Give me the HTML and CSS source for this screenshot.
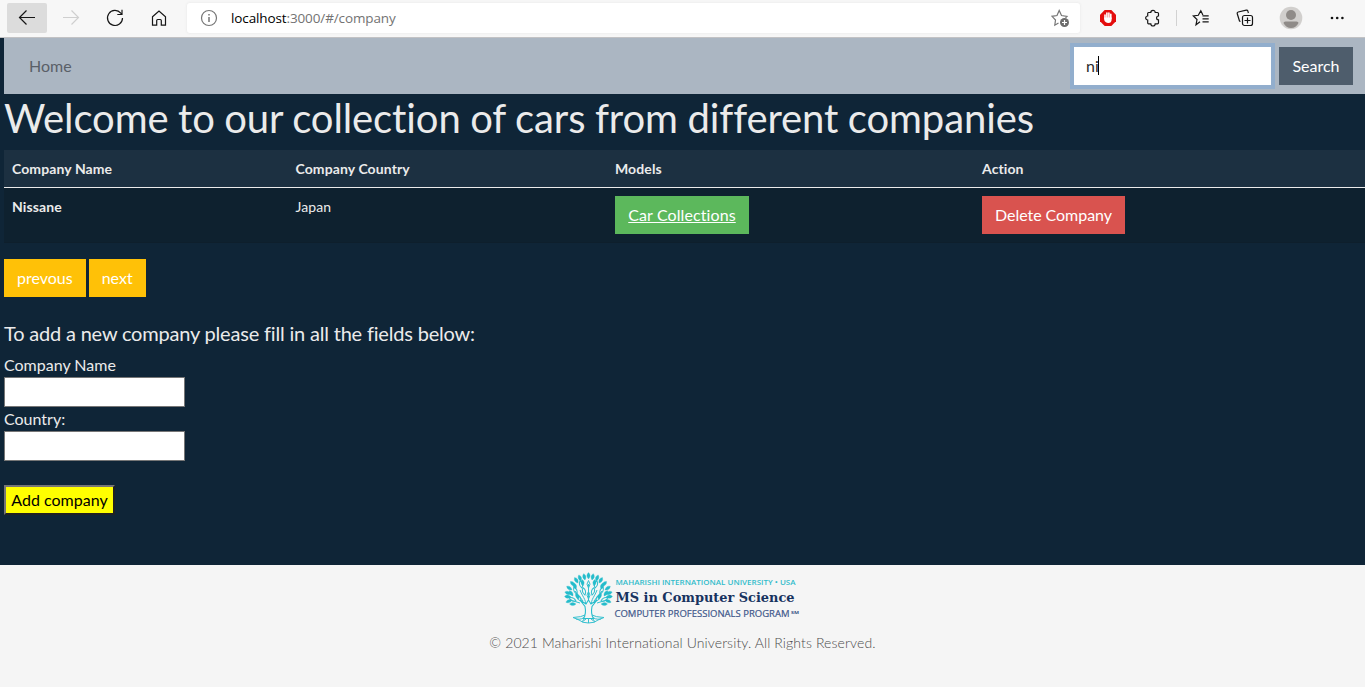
FILE: index.html
```html
<!DOCTYPE html>
<html lang="en">
<head>
<meta charset="utf-8">
<title>Car companies</title>
<link rel="stylesheet" href="styles.css">
</head>
<body>
<div class="browser">
  <div class="tool back"><svg width="18" height="18" viewBox="0 0 18 18"><path d="M17 8.500H1.500M8.500 1.500L1.500 8.500l7 7"/></svg></div>
  <div class="tool forward"><svg width="18" height="18" viewBox="0 0 18 18"><path d="M1 8.500h15.500M9.500 1.500l7 7-7 7"/></svg></div>
  <div class="tool"><svg width="18" height="18" viewBox="0 0 18 18"><path d="M16.500 9A7.500 7.500 0 1 1 14.800 4.200L16 5.500M16 .8v4.700h-4.700"/></svg></div>
  <div class="tool"><svg width="18" height="18" viewBox="0 0 18 18"><path d="M2.500 7.700L9 2l6.500 5.700v8.500h-4.200v-4.700a1 1 0 0 0-1-1H7.700a1 1 0 0 0-1 1v4.700H2.500z"/></svg></div>
  <div class="address">
    <svg class="info" width="18" height="18" viewBox="0 0 18 18"><circle cx="9" cy="9" r="7.500"/><path d="M9 8v5M9 5v1.500" stroke-width="1.500"/></svg>
    <span class="url"><b>localhost</b>:3000/#/company</span>
    <svg class="fav" width="18" height="18" viewBox="0 0 18 18"><path d="M7.500 14L3.800 16.200 4.500 11 1 7.300l5-.8L8.200 1.500 10.500 6.500l5.500.8-1.500 1.500"/><circle class="dot" cx="13.500" cy="13.500" r="4.500"/><path class="plus" d="M13.500 11v5M11 13.500h5"/></svg>
  </div>
  <div class="extensions">
    <svg width="18" height="18" viewBox="0 0 18 18"><path d="M5.700 1h6.600L17 5.700v6.600L12.300 17H5.700L1 12.300V5.700z" fill="#e40d0d" stroke="none"/><path d="M6 9.500V6M7.900 9V4M9.900 9V4M11.800 9.500V5.200" stroke="#fff" stroke-width="1.600" stroke-linecap="round"/><path d="M5.200 8.500h7.400v2.200c0 2-1.200 3.300-3.200 3.300S5.200 12.500 5.200 10.500z" fill="#fff" stroke="none"/></svg>
    <svg width="18" height="18" viewBox="0 0 18 18"><path d="M5.500 3.500h2.300a2.200 2.200 0 0 1 4.400 0h2.300q1 0 1 1V7a1.900 1.900 0 0 0 0 3.800v3q0 1-1 1h-2.300a2.200 2.200 0 0 1-4.400 0H5.500q-.8 0-.8-1V11a2 2 0 1 1 0-4V4.500q0-1 .8-1z"/></svg>
    <i class="divider"></i>
    <svg width="18" height="18" viewBox="0 0 18 18"><path d="M8 12.800L4 15.800l1-5.300L1.300 7l5-.7L8.800 1.700l2.100 4.200M10.500 6.800h6.200M10.500 9.800h6.200M10.500 12.800h6.200"/></svg>
    <svg width="18" height="18" viewBox="0 0 18 18"><rect x="6.500" y="6.500" width="10" height="10" rx="2"/><path d="M11.500 8.500v6M8.500 11.500h6M4.500 12.500L3.500 12 1.200 4.500q-.2-1.200 1-1.500l8-1.800q1.400-.2 1.700 1l.5 1.800M4.500 12.500"/></svg>
    <svg class="avatar" width="24" height="24" viewBox="0 0 24 24"><circle cx="12" cy="12" r="11.300" fill="#d1cfcd"/><circle cx="12" cy="9" r="5" fill="#8f8b88"/><path d="M4.500 17q0-1.500 2-1.500h11q2 0 2 1.500-2.500 5-7.500 5t-7.500-5z" fill="#8f8b88"/></svg>
    <svg width="18" height="18" viewBox="0 0 18 18"><g fill="#111" stroke="none"><circle cx="4" cy="9" r="1.300"/><circle cx="9.200" cy="9" r="1.300"/><circle cx="14.400" cy="9" r="1.300"/></g></svg>
  </div>
</div>
<main class="page">
  <nav class="navbar">
    <a class="home">Home</a>
    <form class="search"><div class="search-input">ni<i class="caret"></i></div><button type="button" class="btn secondary">Search</button></form>
  </nav>
  <h1>Welcome to our collection of cars from different companies</h1>
  <table>
    <colgroup><col class="c1"><col class="c2"><col class="c3"><col></colgroup>
    <thead><tr><th>Company Name</th><th>Company Country</th><th>Models</th><th>Action</th></tr></thead>
    <tbody><tr><th>Nissane</th><td>Japan</td><td><button class="btn success">Car Collections</button></td><td><button class="btn danger">Delete Company</button></td></tr></tbody>
  </table>
  <div class="pager"><button class="btn warning">prevous</button><button class="btn warning">next</button></div>
  <h5>To add a new company please fill in all the fields below:</h5>
  <form class="add">
    <label>Company Name</label><input type="text">
    <label>Country:</label><input type="text">
    <button type="button" class="submit">Add company</button>
  </form>
</main>
<footer>
  <svg class="logo" width="238" height="52" viewBox="0 0 238 52">
    <defs>
      <path id="leaf" d="M0 0q-3.200-3.500 0-6.500q3.200 3 0 6.500z"/>
      <path id="outline" d="M0 0q-3-4 0-7.500q3 3.500 0 7.500z"/>
    </defs>
    <g class="branches">
      <path d="M24.500 31V12M22 34c0-7-4-10-6-16M27 34c0-7 4-10 6-16M16 31l-10-3M33 31l10-3M19 29l-8-10M30 29l8-10"/>
    </g>
    <g class="crown-outline">
      <use href="#outline" transform="translate(24.500 27)"/><use href="#outline" transform="translate(21 23) rotate(-15)"/><use href="#outline" transform="translate(28 23) rotate(15)"/>
      <use href="#outline" transform="translate(17 29) rotate(-35)"/><use href="#outline" transform="translate(32 29) rotate(35)"/><use href="#outline" transform="translate(13 22) rotate(-25)"/><use href="#outline" transform="translate(36 22) rotate(25)"/>
      <use href="#outline" transform="translate(12 29) rotate(-65)"/><use href="#outline" transform="translate(37 29) rotate(65)"/><use href="#outline" transform="translate(24.500 16)"/>
      <use href="#outline" transform="translate(18 16) rotate(-15)"/><use href="#outline" transform="translate(31 16) rotate(15)"/>
    </g>
    <g class="crown">
      <use href="#leaf" transform="translate(24.500 7)"/><use href="#leaf" transform="translate(21 8) rotate(-12)"/><use href="#leaf" transform="translate(28 8) rotate(12)"/><use href="#leaf" transform="translate(17 9) rotate(-20)"/><use href="#leaf" transform="translate(32 9) rotate(20)"/>
      <use href="#leaf" transform="translate(14 11) rotate(-32)"/><use href="#leaf" transform="translate(35 11) rotate(32)"/><use href="#leaf" transform="translate(11 14) rotate(-45)"/><use href="#leaf" transform="translate(38 14) rotate(45)"/>
      <use href="#leaf" transform="translate(8 18) rotate(-55)"/><use href="#leaf" transform="translate(41 18) rotate(55)"/><use href="#leaf" transform="translate(7 22) rotate(-72)"/><use href="#leaf" transform="translate(42 22) rotate(72)"/>
      <use href="#leaf" transform="translate(7 25) rotate(-85)"/><use href="#leaf" transform="translate(42 25) rotate(85)"/><use href="#leaf" transform="translate(8 28) rotate(-110)"/><use href="#leaf" transform="translate(41 28) rotate(110)"/>
      <use href="#leaf" transform="translate(12 17) rotate(-20)"/><use href="#leaf" transform="translate(37 17) rotate(20)"/><use href="#leaf" transform="translate(19 14) rotate(-8)"/><use href="#leaf" transform="translate(30 14) rotate(8)"/>
      <use href="#leaf" transform="translate(9 24) rotate(-35)"/><use href="#leaf" transform="translate(40 24) rotate(35)"/><use href="#leaf" transform="translate(12 32) rotate(-90)"/><use href="#leaf" transform="translate(37 32) rotate(90)"/>
      <use href="#leaf" transform="translate(15 27) rotate(-30)"/><use href="#leaf" transform="translate(34 27) rotate(30)"/>
    </g>
    <path class="trunk" d="M22 32L16 28l5 6.500c1 5 1 8-1.500 12h10c-2.500-4-2.500-7-1.500-12l5-6.500-6 4-2.500-4z"/>
    <path class="roots" d="M21 43q-3 2-12 2.500l6 2.500q3 3 9.500 3t9.500-3l6-2.500Q31 45 28 43M21 44q-2 4-9 3M28 44q2 4 9 3M22 47l-4 3M27 47l4 3M24.500 46v5M20.500 47l-2 1.500M28.500 47l2 1.500"/>
    <text x="51.500" y="13" class="university" textLength="180" lengthAdjust="spacingAndGlyphs">MAHARISHI INTERNATIONAL UNIVERSITY • USA</text>
    <text x="51.500" y="30" class="degree" textLength="179" lengthAdjust="spacingAndGlyphs">MS in Computer Science</text>
    <text x="50.500" y="45" class="program" textLength="175" lengthAdjust="spacingAndGlyphs">COMPUTER PROFESSIONALS PROGRAM</text>
    <text x="227" y="42" class="mark" textLength="8" lengthAdjust="spacingAndGlyphs">SM</text>
  </svg>
  <p>© 2021 Maharishi International University. All Rights Reserved.</p>
</footer>
</body>
</html>
```
FILE: styles.css
```css
* { box-sizing: border-box; }
body { margin: 0; height: 687px; overflow: hidden; background: #0f2537; color: #ebebeb; font: 16px/1.5 Lato, sans-serif; font-variant-ligatures: none; display: flex; flex-direction: column; }
button, input { font: inherit; border-radius: 0; margin: 0; }

.browser { height: 38px; flex: none; display: flex; align-items: flex-start; background: #f7f7f7; border-bottom: 1px solid #c2c2c4; padding: 3px 18px 0 7px; }
.browser svg { fill: none; stroke: #161616; stroke-width: 1.2; flex: none; }
.tool { flex: none; width: 40px; height: 30px; margin-right: 4px; border-radius: 2px; display: flex; align-items: center; justify-content: center; }
.back { background: #dcdcdc; }
.browser .forward svg { stroke: #cfcfcf; }
.address { flex: none; width: 893px; height: 30px; margin-left: 4px; padding: 0 11px 0 13px; display: flex; align-items: center; background: #fff; border-radius: 3px; box-shadow: 0 0 3px #e4e4e4; }
.browser .info, .browser .fav { stroke: #767676; }
.browser .dot { fill: #6c6c6c; stroke: none; }
.browser .plus { stroke: #fff; }
.url { flex: 1; margin-left: 13px; font: 13.5px/20px "Open Sans", sans-serif; color: #737373; letter-spacing: -.12px; }
.url b { color: #000; font-weight: 400; }
.extensions { flex: none; height: 30px; margin-left: 19px; display: flex; align-items: center; }
.divider { width: 1px; height: 16px; background: #d2d2d2; margin: 0 15px; }
.extensions svg + svg { margin-left: 26px; }
.extensions svg + svg.avatar { margin-left: 25px; }
.extensions .avatar + svg { margin-left: 25px; }
.browser .avatar { stroke: none; }

.page { flex: none; height: 527px; padding-left: 4px; }
.navbar { height: 56px; padding: 0 12px 0 25px; background: #abb6c2; display: flex; align-items: center; justify-content: space-between; }
.home { color: #5a6068; }
.search { display: flex; gap: 8px; margin: 0; }
.search-input { width: 197px; height: 38px; padding: 7px 12px; display: flex; background: #fff; color: #2b2b2b; box-shadow: 0 0 0 4px #92aecd; }
.caret { width: 1px; height: 19px; margin: 2px 0 0 -1px; background: #000; }
.btn { height: 38px; padding: 6px 12px; border: 1px solid transparent; color: #fff; line-height: 24px; display: block; white-space: nowrap; }
.secondary { width: 74px; background: #4e5d6c; }
.success { width: 134px; background: #5cb85c; text-decoration: underline; letter-spacing: .1px; }
.danger { width: 143px; background: #d9534f; letter-spacing: -.05px; }
.warning { background: #ffc107; }
h1 { margin: 0 0 8px; font-size: 40px; line-height: 48px; font-weight: 400; letter-spacing: -.1px; word-spacing: -.6px; }

table { width: 100%; border-collapse: separate; border-spacing: 0; table-layout: fixed; font-size: 14px; line-height: 21px; }
.c1 { width: 283.5px; }
.c2 { width: 319.5px; }
.c3 { width: 367px; }
th, td { padding: 8px; text-align: left; vertical-align: top; border-bottom: 1px solid #0e1f2c; letter-spacing: .1px; }
thead th { background: #1c3041; border-bottom-color: #ebebeb; }
tbody th, tbody td { background: #0e212f; }
td .btn { font-size: 16px; }
.pager { display: flex; gap: 3px; margin: 16px 0 24px; }
h5 { margin: 0 0 8px; font-size: 20px; line-height: 24px; font-weight: 400; letter-spacing: -.19px; }
.add { display: flex; flex-direction: column; align-items: flex-start; margin: 0; }
.add label { height: 24px; }
.add input { width: 181px; height: 30px; border: 1px solid #767676; background: #fff; }
.submit { margin-top: 24px; width: 111px; height: 30px; padding: 0; border: 2px outset #767676; background: #ff0; color: #000; line-height: 24px; }

footer { flex: 1; background: #f5f5f5; display: flex; flex-direction: column; align-items: center; padding-top: 7px; }
.logo { display: block; overflow: visible; }
.branches, .crown-outline, .roots { fill: none; stroke: #35c0cf; stroke-width: 1; }
.crown { fill: #24bccb; stroke: #24bccb; stroke-width: .3; }
.trunk { fill: #f5f5f5; stroke: #24bccb; stroke-width: 1.1; }
.university { font: 600 7.5px "Open Sans", sans-serif; fill: #31bccb; }
.degree { font: bold 13.5px "DejaVu Serif", serif; fill: #17335f; }
.program { font: 9.5px "Open Sans", sans-serif; fill: #40578a; stroke: #40578a; stroke-width: .2; }
.mark { font: bold 4px "Open Sans", sans-serif; fill: #40578a; }
footer p { margin: 8px 0 0; font-size: 14px; line-height: 21px; font-weight: 300; color: #4c4c4c; letter-spacing: .11px; }
```
